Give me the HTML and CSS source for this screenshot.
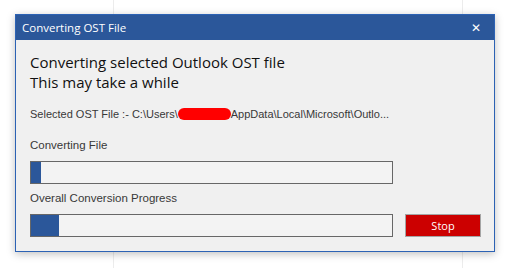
FILE: index.html
```html
<!DOCTYPE html>
<html lang="en">
<head>
    <meta charset="UTF-8">
    <title>Converting OST File</title>
    <link rel="stylesheet" href="styles.css">
</head>
<body>
    <div class="dialog">
        <div class="title-bar">
            <span class="title">Converting OST File</span>
            <span class="close">&#x2715;</span>
        </div>
        <div class="content">
            <div class="heading">
                Converting selected Outlook OST file<br>
                This may take a while
            </div>
            <div class="path">Selected OST File :- C:\Users\<span class="redacted"></span>AppData\Local\Microsoft\Outlo...</div>
            <div class="label first">Converting File</div>
            <div class="progress"><div class="fill" style="width: 10px"></div></div>
            <div class="label">Overall Conversion Progress</div>
            <div class="bottom-row">
                <div class="progress"><div class="fill" style="width: 28px"></div></div>
                <button class="stop">Stop</button>
            </div>
        </div>
    </div>
</body>
</html>
```

FILE: styles.css
```css
body {
    margin: 0;
    height: 268px;
    background-color: #fff;
    background-image:
        linear-gradient(#ececec, #ececec),
        linear-gradient(#ececec, #ececec);
    background-size: 1px 100%, 1px 100%;
    background-position: 113px 0, 462px 0;
    background-repeat: no-repeat;
    padding-top: 14px;
    box-sizing: border-box;
}
.dialog {
    margin-left: 15px;
    width: 480px;
    box-sizing: border-box;
    border: 1px solid #2c62b4;
    background-color: #f0f0f0;
    box-shadow: 0 2px 8px rgba(0, 0, 0, 0.25);
}
.title-bar {
    height: 25px;
    background-color: #2b579a;
    color: #fff;
    display: flex;
    align-items: center;
    justify-content: space-between;
    padding: 0 13px 0 6px;
}
.title {
    font-family: "Open Sans", sans-serif;
    font-size: 11.5px;
}
.close {
    font-family: "DejaVu Sans", sans-serif;
    font-size: 12px;
    font-weight: bold;
}
.content {
    padding: 12px 13px 14px 14px;
}
.heading {
    font-family: "Open Sans", sans-serif;
    font-size: 15px;
    line-height: 20px;
    color: #111;
}
.path, .label {
    font-family: "Liberation Sans", Arial, sans-serif;
    font-size: 11px;
    color: #383838;
}
.path {
    margin-top: 15px;
    line-height: 14px;
}
.redacted {
    display: inline-block;
    width: 53px;
    height: 12px;
    border-radius: 6px;
    background-color: #f00;
    vertical-align: -2px;
}
.label {
    font-size: 11.5px;
    margin: 7px 0 9px;
    line-height: 14px;
}
.label.first {
    margin-top: 17px;
}
.progress {
    width: 363px;
    height: 23px;
    box-sizing: border-box;
    border: 1px solid #676767;
    background-color: #f3f3f3;
}
.fill {
    height: 100%;
    background-color: #2b579a;
}
.bottom-row {
    display: flex;
    gap: 12px;
    margin-top: 1px;
}
.stop {
    width: 76px;
    height: 23px;
    border: 1px solid #a5a5a5;
    background-color: #cc0000;
    color: #fff;
    font-family: "Open Sans", sans-serif;
    font-size: 11px;
    padding: 0;
}
```
